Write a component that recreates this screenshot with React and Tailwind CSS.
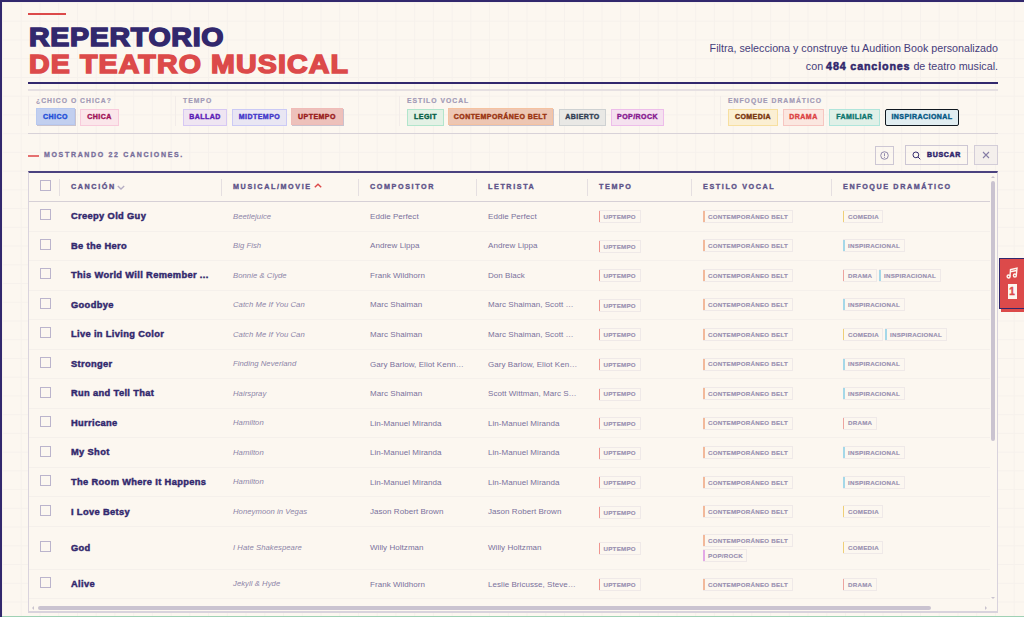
const labelFont = 'font-["Liberation_Sans",Arial,sans-serif] font-bold';

const filterGroups = [
  {
    title: '¿CHICO O CHICA?',
    width: 'w-[147px]',
    chips: [
      { label: 'CHICO', width: 'w-[39px] ml-px -mr-px', active: true, tone: 'bg-[#c2cfef] border-[#b8c9f0] text-[#2450d8]' },
      { label: 'CHICA', width: 'w-[39px]', tone: 'bg-[#fbe6ea] border-[#f8cadb] text-[#a01458]' },
    ],
  },
  {
    title: 'TEMPO',
    width: 'w-[224px]',
    chips: [
      { label: 'BALLAD', width: 'w-11', tone: 'bg-[#efe5f2] border-[#d6c8f3] text-[#5b21b6]' },
      { label: 'MIDTEMPO', width: 'w-[55px]', tone: 'bg-[#e9e6f3] border-[#cbcaf5] text-[#4338ca]' },
      { label: 'UPTEMPO', width: 'w-[52px]', active: true, tone: 'bg-[#edc1bb] border-[#f0bcb8] text-[#991b1b]' },
    ],
  },
  {
    title: 'ESTILO VOCAL',
    width: 'w-[321px]',
    chips: [
      { label: 'LEGIT', width: 'w-[37px]', tone: 'bg-[#e3f1e5] border-[#b2e5cc] text-[#065f46]' },
      { label: 'CONTEMPORÁNEO BELT', width: 'w-[105px]', active: true, tone: 'bg-[#edc6b3] border-[#f5c2a0] text-[#9a3412]' },
      { label: 'ABIERTO', width: 'w-[47px]', tone: 'bg-[#e9e8e5] border-[#ced1d2] text-[#334155]' },
      { label: 'POP/ROCK', width: 'w-[53px]', tone: 'bg-[#f5e1ef] border-[#edbdea] text-[#86198f]' },
    ],
  },
  {
    title: 'ENFOQUE DRAMÁTICO',
    width: 'w-[278px]',
    chips: [
      { label: 'COMEDIA', width: 'w-[50px]', tone: 'bg-[#fbefd3] border-[#f7dfa0] text-[#78350f]' },
      { label: 'DRAMA', width: 'w-[41px]', tone: 'bg-[#fbe7e0] border-[#f6c6c1] text-[#dc4444]' },
      { label: 'FAMILIAR', width: 'w-[51px]', tone: 'bg-[#e0f0e7] border-[#b0e5db] text-[#0f766e]' },
      { label: 'INSPIRACIONAL', width: 'w-[74px]', focus: true, tone: 'bg-[#e1edf1] border-[#101820] text-[#075985]' },
    ],
  },
];

const columns = [
  { label: 'CANCIÓN', sort: 'down' },
  { label: 'MUSICAL/MOVIE', sort: 'up' },
  { label: 'COMPOSITOR' },
  { label: 'LETRISTA' },
  { label: 'TEMPO' },
  { label: 'ESTILO VOCAL' },
  { label: 'ENFOQUE DRAMÁTICO' },
];

const belt = ['CONTEMPORÁNEO BELT'];

const songs = [
  ['Creepy Old Guy', 'Beetlejuice', 'Eddie Perfect', 'Eddie Perfect', belt, ['COMEDIA']],
  ['Be the Hero', 'Big Fish', 'Andrew Lippa', 'Andrew Lippa', belt, ['INSPIRACIONAL']],
  ['This World Will Remember ...', 'Bonnie & Clyde', 'Frank Wildhorn', 'Don Black', belt, ['DRAMA', 'INSPIRACIONAL']],
  ['Goodbye', 'Catch Me If You Can', 'Marc Shaiman', 'Marc Shaiman, Scott …', belt, ['INSPIRACIONAL']],
  ['Live in Living Color', 'Catch Me If You Can', 'Marc Shaiman', 'Marc Shaiman, Scott …', belt, ['COMEDIA', 'INSPIRACIONAL']],
  ['Stronger', 'Finding Neverland', 'Gary Barlow, Eliot Kenn…', 'Gary Barlow, Eliot Ken…', belt, ['INSPIRACIONAL']],
  ['Run and Tell That', 'Hairspray', 'Marc Shaiman', 'Scott Wittman, Marc S…', belt, ['INSPIRACIONAL']],
  ['Hurricane', 'Hamilton', 'Lin-Manuel Miranda', 'Lin-Manuel Miranda', belt, ['DRAMA']],
  ['My Shot', 'Hamilton', 'Lin-Manuel Miranda', 'Lin-Manuel Miranda', belt, ['INSPIRACIONAL']],
  ['The Room Where It Happens', 'Hamilton', 'Lin-Manuel Miranda', 'Lin-Manuel Miranda', belt, ['INSPIRACIONAL']],
  ['I Love Betsy', 'Honeymoon in Vegas', 'Jason Robert Brown', 'Jason Robert Brown', belt, ['COMEDIA']],
  ['God', 'I Hate Shakespeare', 'Willy Holtzman', 'Willy Holtzman', ['CONTEMPORÁNEO BELT', 'POP/ROCK'], ['COMEDIA']],
  ['Alive', 'Jekyll & Hyde', 'Frank Wildhorn', 'Leslie Bricusse, Steve…', belt, ['DRAMA']],
];

const tags = {
  UPTEMPO: 'w-[42px] shadow-[inset_1px_0_0_#f0958f] pl-[4.5px]',
  'CONTEMPORÁNEO BELT': 'w-[90px] shadow-[inset_2px_0_0_#f2b99b] pl-[5px]',
  'POP/ROCK': 'w-[44px] shadow-[inset_2px_0_0_#e3a9e6] pl-[5px]',
  COMEDIA: 'w-[40px] shadow-[inset_1px_0_0_#efcf78] pl-[5px]',
  DRAMA: 'w-[34px] shadow-[inset_1px_0_0_#eda5a0] pl-[5px]',
  INSPIRACIONAL: 'w-[62px] shadow-[inset_2px_0_0_#a5d8e8] pl-[5px]',
};

const gridCols = 'grid grid-cols-[30px_162px_137px_118px_111px_104px_140px_1fr]';

function Chip({ chip }) {
  return (
    <button
      className={`${labelFont} flex h-[17px] shrink-0 items-center justify-center whitespace-nowrap text-[7px] tracking-[0.45px] [-webkit-text-stroke:0.4px_currentColor] ${chip.width} ${chip.tone} ${
        chip.focus ? 'rounded-[2px] border-[1.5px]' : 'border'
      } ${chip.active ? '-translate-x-px -translate-y-px pt-px shadow-[1px_1px_0_#c9c3ce]' : ''}`}
    >
      {chip.label}
    </button>
  );
}

function Tag({ label }) {
  return (
    <span className={`${labelFont} flex h-[13px] shrink-0 items-center whitespace-nowrap border-y border-r border-[#efe9e8] text-[6.2px] tracking-[0.25px] text-[#9990b1] [-webkit-text-stroke:0.15px_currentColor] ${tags[label]}`}>
      {label}
    </span>
  );
}

function Checkbox() {
  return <span className="mb-[3px] ml-[11px] block size-[11px] border border-[#bbb4cc]" />;
}

export default function App() {
  return (
    <div className="relative flex h-[617px] w-[1024px] flex-col overflow-hidden border-l-2 border-t-2 border-[#32286d] bg-[#fcf7f0] bg-[linear-gradient(to_right,#f6f1ec_1px,transparent_1px),linear-gradient(to_bottom,#f6f1ec_1px,transparent_1px)] bg-[length:18.74px_18.74px] font-['Liberation_Sans',Arial,sans-serif] text-[#32286d]">
      <div className="ml-[26px] flex w-[970px] flex-col">
        <header className="flex h-[82px] justify-between border-b-2 border-[#32286d]">
          <div className="pt-[11px]">
            <div className="h-[2px] w-[38px] bg-[#dc4a4a]" />
            <h1 className="ml-px mt-[9px] origin-left scale-x-[1.1] whitespace-nowrap text-[26px] font-bold leading-[27px]">
              <span className="block tracking-[0.6px] [-webkit-text-stroke:1.5px_currentColor]">REPERTORIO</span>
              <span className="block tracking-[1px] text-[#dc4a4a] [-webkit-text-stroke:1.5px_currentColor]">DE TEATRO MUSICAL</span>
            </h1>
          </div>
          <p className="pt-[36.5px] text-right text-[10.72px] leading-[18px] text-[#463d7b]">
            Filtra, selecciona y construye tu Audition Book personalizado
            <br />
            con <strong className="tracking-[0.85px] text-[#32286d] [-webkit-text-stroke:0.5px_currentColor]">484 canciones</strong> de teatro musical.
          </p>
        </header>

        <section className="mt-[5px] flex h-[45px] border-b border-t-2 border-b-[#d8d2d8] border-t-[#e6e0e2] pt-[5px]">
          {filterGroups.map((group) => (
            <div key={group.title} className={`h-[30px] shrink-0 border-l border-[#f2ece9] pl-[7px] ${group.width}`}>
              <div className={`${labelFont} h-[13px] whitespace-nowrap text-[6.8px] leading-[9px] tracking-[1px] text-[#a29ab6] [-webkit-text-stroke:0.2px_currentColor]`}>{group.title}</div>
              <div className="flex gap-[5px]">
                {group.chips.map((chip) => (
                  <Chip key={chip.label} chip={chip} />
                ))}
              </div>
            </div>
          ))}
        </section>

        <div className="flex h-[37px] items-center justify-between pt-[5px]">
          <div className={`${labelFont} flex items-center gap-[5px] whitespace-nowrap pt-px text-[7px] tracking-[1.67px] text-[#776e9b] [-webkit-text-stroke:0.3px_currentColor]`}>
            <span className="h-[2px] w-[11px] bg-[#e57070]" />
            MOSTRANDO 22 CANCIONES.
          </div>
          <div className="flex items-center">
            <button className="mr-[11px] flex size-[19px] items-center justify-center border border-[#cdc7d4] text-[#867da5]">
              <svg viewBox="0 0 10 10" className="size-[9px]" fill="none" stroke="currentColor" strokeWidth="1">
                <circle cx="5" cy="5" r="4.2" />
                <path d="M5 2.5v3.2M5 6.6v1" />
              </svg>
            </button>
            <button className={`${labelFont} mr-1.5 flex h-5 w-[63px] items-center justify-center gap-[6px] border border-[#cdc7d4] text-[7px] tracking-[0.7px] [-webkit-text-stroke:0.5px_currentColor]`}>
              <svg viewBox="0 0 10 10" className="size-[9px]" fill="none" stroke="currentColor" strokeWidth="1.1">
                <circle cx="4.3" cy="4.3" r="3.2" />
                <path d="m6.7 6.7 2.5 2.5" />
              </svg>
              BUSCAR
            </button>
            <button className="flex h-5 w-6 items-center justify-center border border-[#d3cdd8] bg-[#f4efec] text-[#867da5]">
              <svg viewBox="0 0 8 8" className="size-[8px]" fill="none" stroke="currentColor" strokeWidth="1.1">
                <path d="m1 1 6 6M7 1 1 7" />
              </svg>
            </button>
          </div>
        </div>

        <main className="flex h-[442px] flex-col border-b-2 border-l border-r border-t-2 border-[#d9d3dd] border-t-[#4b427f] bg-[#fcf7f0]">
          <div className="flex h-[428px]">
            <div className="w-[961px] overflow-hidden">
              <div className={`${gridCols} h-[29px] items-center border-b border-[#d6d0d6]`}>
                <Checkbox />
                {columns.map((col) => (
                  <div key={col.label} className={`${labelFont} flex h-[17px] items-center whitespace-nowrap border-l border-[#e5dfe1] pl-[11px] text-[7.2px] tracking-[1.6px] text-[#5d5389] [-webkit-text-stroke:0.35px_currentColor]`}>
                    {col.label}
                    {col.sort === 'down' && (
                      <svg viewBox="0 0 8 8" className="ml-[1.5px] size-[8px] text-[#b4adc3]" fill="none" stroke="currentColor" strokeWidth="1.3">
                        <path d="m.8 3 3.2 3L7.2 3" />
                      </svg>
                    )}
                    {col.sort === 'up' && (
                      <svg viewBox="0 0 8 8" className="ml-[2px] size-[8px] text-[#dc4a4a]" fill="none" stroke="currentColor" strokeWidth="1.5">
                        <path d="m.8 4.3 3.2-3 3.2 3" />
                      </svg>
                    )}
                  </div>
                ))}
              </div>
              {songs.map(([title, musical, composer, lyricist, vocal, focus]) => (
                <div
                  key={title}
                  className={`${gridCols} items-center border-b border-[#f5f0eb] text-[8px] tracking-[0.05px] text-[#7a719c] ${vocal.length > 1 ? 'h-[42.9px]' : 'h-[29.56px]'}`}
                >
                  <Checkbox />
                  <div className="whitespace-nowrap pl-3 pt-[1.5px] text-[9.3px] font-bold tracking-[0.35px] text-[#32286d] [-webkit-text-stroke:0.45px_currentColor]">{title}</div>
                  <div className="whitespace-nowrap pl-3 text-[7.7px] italic text-[#8d85a8]">{musical}</div>
                  <div className="whitespace-nowrap pl-3 pt-px">{composer}</div>
                  <div className="whitespace-nowrap pl-3 pt-px">{lyricist}</div>
                  <div className="pl-3 pt-px">
                    <Tag label="UPTEMPO" />
                  </div>
                  <div className="flex flex-col gap-0.5 pl-3">
                    {vocal.map((v) => (
                      <Tag key={v} label={v} />
                    ))}
                  </div>
                  <div className="flex gap-0.5 pl-3">
                    {focus.map((f) => (
                      <Tag key={f} label={f} />
                    ))}
                  </div>
                </div>
              ))}
            </div>
            <div className="flex flex-1 flex-col items-center pr-[2px]">
              <span className="mt-[3px] border-x-2 border-b-2 border-x-transparent border-b-[#c9c3ce]" />
              <span className="mt-[3px] h-[260px] w-1 rounded-full bg-[#cac3d0]" />
              <span className="mb-0.5 mt-auto border-x-2 border-t-2 border-x-transparent border-t-[#c9c3ce]" />
            </div>
          </div>
          <div className="flex h-[10px] items-center pt-[3px]">
            <span className="ml-[3px] border-y-2 border-r-2 border-y-transparent border-r-[#c9c3ce]" />
            <span className="ml-[4px] h-1 w-[893px] rounded-full bg-[#cac3d0]" />
            <span className="ml-auto mr-[10px] border-y-2 border-l-2 border-y-transparent border-l-[#c9c3ce]" />
          </div>
        </main>
      </div>

      <button className="absolute -right-px top-[256px] flex h-[51px] w-[26px] flex-col items-center border-[1.5px] border-[#32286d] bg-[#dc4a4a] pt-[8px] text-[#fcf7f0] shadow-[2px_3px_0_#dc4a4a]">
        <svg viewBox="0 0 12 12" className="size-[12px]" fill="none" stroke="currentColor" strokeWidth="1.4">
          <path d="M4 9.5 4.5 2.5 11 1.2 10.3 8.5M4.3 4.8l6.4-1.3" />
          <circle cx="2.6" cy="9.5" r="1.5" />
          <circle cx="8.9" cy="8.5" r="1.5" />
        </svg>
        <span className="mt-[5px] flex h-[15px] w-[9px] items-center justify-center bg-[#fcf7f0] text-[10px] font-bold text-[#dc4a4a] [-webkit-text-stroke:0.4px_currentColor]">1</span>
      </button>
      <div className="absolute bottom-0 left-0 h-[1.5px] w-full bg-[#9fd1b4]" />
    </div>
  );
}
